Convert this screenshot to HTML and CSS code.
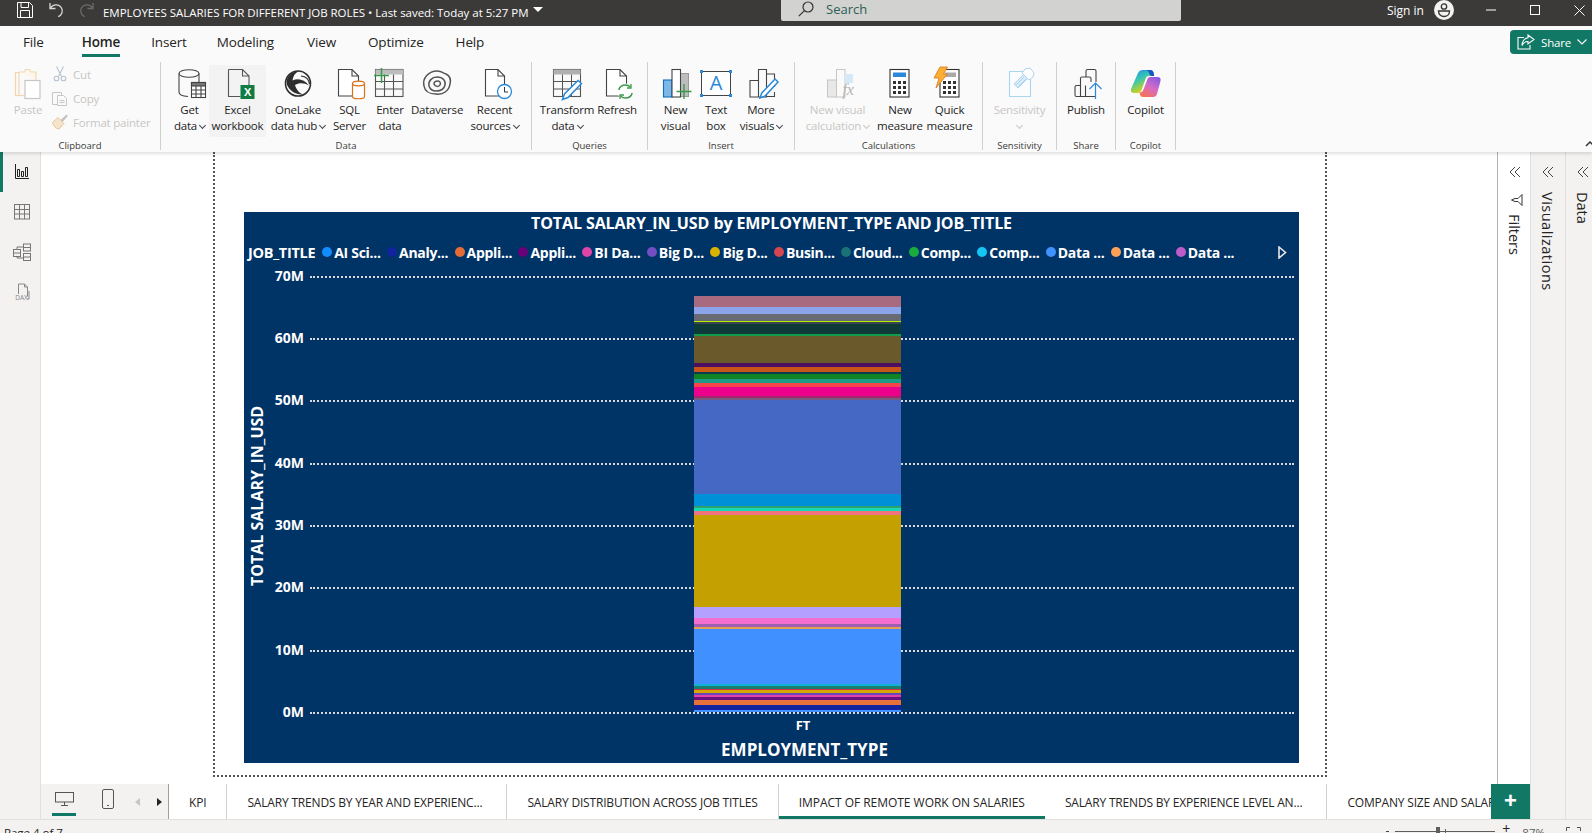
FILE: index.html
```html
<!DOCTYPE html>
<html lang="en">
<head>
  <meta charset="UTF-8">
  <meta name="viewport" content="width=device-width, initial-scale=1.0">
  <title>EMPLOYEES SALARIES FOR DIFFERENT JOB ROLES</title>
  <link rel="stylesheet" href="styles.css">
</head>
<body>
  <!-- Title bar -->
  <header class="titlebar">
    <div class="title-left">
      <svg class="tb-save" width="16" height="16" viewBox="0 0 16 16" fill="none" stroke="#fff" stroke-width="1"><path d="M.5.5h12l3 3v12H.5z"/><path d="M4 .5v5h7.500v-5M3.500 15.500v-7h9v7"/></svg>
      <svg class="tb-undo" width="15" height="16" viewBox="0 0 15 16" fill="none" stroke="#d8d8d8" stroke-width="1.300"><path d="M1 1v5.500h5.500"/><path d="M1.200 6.300C3 3.500 6 2.300 9 3.200c3.500 1.100 5 4.500 4 7.500-.6 1.800-2 3.200-3.800 4"/></svg>
      <svg class="tb-redo" width="15" height="16" viewBox="0 0 15 16" fill="none" stroke="#6b6a69" stroke-width="1.300"><path d="M14 1v5.500H8.500"/><path d="M13.800 6.300C12 3.500 9 2.300 6 3.200c-3.500 1.100-5 4.500-4 7.500.6 1.800 2 3.200 3.800 4"/></svg>
      <span class="doc-title">EMPLOYEES SALARIES FOR DIFFERENT JOB ROLES • Last saved: Today at 5:27 PM</span>
      <span class="doc-caret"></span>
    </div>
    <div class="search">
      <svg width="16" height="16" viewBox="0 0 16 16" fill="none" stroke="#333" stroke-width="1.200"><circle cx="10" cy="6" r="5"/><path d="M6.400 9.600.8 15.200"/></svg>
      <span>Search</span>
    </div>
    <div class="title-right">
      <span class="signin">Sign in</span>
      <svg class="avatar" width="20" height="20" viewBox="0 0 20 20"><circle cx="10" cy="10" r="10" fill="#f3f2f1"/><circle cx="10" cy="6.500" r="2.700" fill="none" stroke="#333" stroke-width="1.300"/><path d="M4.500 11h11c0 3.500-2.500 5.500-5.500 5.500S4.500 14.500 4.500 11z" fill="none" stroke="#333" stroke-width="1.300"/></svg>
      <svg class="win-min" width="10" height="10" viewBox="0 0 10 10"><path d="M0 5h10" stroke="#fff"/></svg>
      <svg class="win-max" width="10" height="10" viewBox="0 0 10 10"><rect x=".5" y=".5" width="9" height="9" fill="none" stroke="#fff"/></svg>
      <svg class="win-close" width="11" height="11" viewBox="0 0 11 11"><path d="M.5.5l10 10M10.500.5l-10 10" stroke="#fff"/></svg>
    </div>
  </header>

  <!-- Ribbon -->
  <nav class="ribbon-tabs">
    <span class="rtab rtab-file">File</span>
    <span class="rtab rtab-home active">Home</span>
    <span class="rtab rtab-insert">Insert</span>
    <span class="rtab rtab-modeling">Modeling</span>
    <span class="rtab">View</span>
    <span class="rtab">Optimize</span>
    <span class="rtab">Help</span>
    <div class="share-btn">
      <svg width="18" height="16" viewBox="0 0 18 16" fill="none" stroke="#fff" stroke-width="1.100"><path d="M7 3.500H1v11.500h12v-4"/><path d="M11 1l6 4.500-6 4.500V7.500C8 7.500 6 9 5 11.500 5 7.500 7.500 4 11 3.700z"/></svg>
      <span>Share</span>
      <svg width="10" height="6" viewBox="0 0 10 6" fill="none" stroke="#fff" stroke-width="1.100"><path d="M.5.500 5 5l4.500-4.500"/></svg>
    </div>
  </nav>

  <div class="ribbon">
    <section class="group g-clipboard">
      <div class="group-items">
        <div class="item it-paste disabled">
          <svg class="ico" viewBox="0 0 32 32" fill="none"><path d="M7 4h5l1.500-2.500h4L19 4h5v8" stroke="#f3d6b0" stroke-width="1.200" fill="#fdf6ec"/><path d="M3.500 4.500h3.500v23H3.500z" stroke="#f3d6b0" stroke-width="1.200" /><path d="M7 27.500h6" stroke="#f3d6b0" stroke-width="1.200"/><rect x="13" y="12.500" width="15" height="18" fill="#fff" stroke="#c8c6c4" stroke-width="1.200"/></svg>
          <span class="lbl">Paste</span>
        </div>
        <div class="small-col">
          <div class="small-item disabled">
            <svg width="16" height="16" viewBox="0 0 16 16" fill="none" stroke="#b6c4d2" stroke-width="1.100"><path d="M4.500.5l5 10M11.500.5l-5 10"/><circle cx="4.500" cy="12.500" r="2.300"/><circle cx="11.500" cy="12.500" r="2.300"/></svg>
            <span>Cut</span>
          </div>
          <div class="small-item disabled">
            <svg width="16" height="16" viewBox="0 0 16 16" fill="none" stroke="#c8c6c4"><path d="M.5 2.500h9v12h-9z"/><path d="M5.500 5.500h6l3 3v7h-9z" fill="#fafafa"/><path d="M7.500 10.500h5M7.500 12.500h5"/></svg>
            <span>Copy</span>
          </div>
          <div class="small-item disabled">
            <svg width="16" height="16" viewBox="0 0 16 16" fill="none"><path d="M.5 8.500 6 3.500l6 6-5 5.500C4 15 1.500 12 .5 8.500z" fill="#f5e3cb" stroke="#e8c69a"/><path d="M9 6l5.500-5 1 1-5 5.500z" fill="#c8c6c4" stroke="#b5b3b1" stroke-width=".6"/></svg>
            <span>Format painter</span>
          </div>
        </div>
      </div>
      <div class="group-label">Clipboard</div>
    </section>

    <section class="group g-data">
      <div class="group-items">
        <div class="item it-get">
          <svg class="ico" viewBox="0 0 32 32" fill="none" stroke="#444" stroke-width="1.100"><ellipse cx="15" cy="5.500" rx="10" ry="3.800"/><path d="M5 5.500V24c0 2.500 4 4.200 9 4.500M25 5.500V14"/><rect x="17.500" y="14.500" width="14" height="15" fill="#fff"/><rect x="17.500" y="14.500" width="14" height="3.500" fill="#777"/><path d="M17.500 22h14M17.500 26h14M22 18v11.500M27 18v11.500"/></svg>
          <span class="lbl">Get<br>data<i class="chev"></i></span>
        </div>
        <div class="item it-excel hovered">
          <svg class="ico" viewBox="0 0 32 32" fill="none"><path d="M6.500 1.500h14l6.500 6.500v9M18.500 28.500h-12V1.500" stroke="#555" stroke-width="1.100"/><path d="M20.500 1.500V8H27" stroke="#555" stroke-width="1.100"/><rect x="18.500" y="17" width="14" height="14" fill="#107c41"/><text class="xl" x="25.500" y="28">X</text></svg>
          <span class="lbl">Excel<br>workbook</span>
        </div>
        <div class="item it-onelake">
          <svg class="ico" viewBox="0 0 32 32" fill="none" stroke="#2e2e2e"><circle cx="16" cy="15.500" r="12.500" stroke-width="1.600"/><path d="M5 17C3 10 9 3 17 3c-4 2-6 5-6.500 9.500 5.500-2.500 12-1 16.500 5-5-3-10-3-14-.5 1 4 4 8 8 9.500C14 27 8 23 5 17z" fill="#2e2e2e" stroke="none"/><path d="M19 8c5 .5 8 4 8.500 8" stroke-width="1.200"/></svg>
          <span class="lbl">OneLake<br>data hub<i class="chev"></i></span>
        </div>
        <div class="item it-sql">
          <svg class="ico" viewBox="0 0 32 32" fill="none"><path d="M4.500 1.500h13.500l6.500 6.500v20H4.500z" stroke="#444" stroke-width="1.100" fill="#fff"/><path d="M18 1.500V8h6.500" stroke="#444" stroke-width="1.100"/><path d="M18.500 15.500v13c0 3 12 3 12 0v-13z" fill="#fff" stroke="#d9731a" stroke-width="1.200"/><ellipse cx="24.500" cy="15.500" rx="6" ry="2.300" fill="#fff" stroke="#d9731a" stroke-width="1.200"/></svg>
          <span class="lbl">SQL<br>Server</span>
        </div>
        <div class="item it-enter">
          <svg class="ico" viewBox="0 0 32 32" fill="none" stroke="#555" stroke-width="1.100"><rect x="1.500" y="1.500" width="27.500" height="27"/><rect x="1.500" y="1.500" width="27.500" height="5" fill="#bdbdbd" stroke="none"/><path d="M1.500 13.500H29M1.500 21H29M10.500 6.500v22M19.500 6.500v22"/><path d="M7.500 0v15M0 7.500h15" stroke="#3a9a4a" stroke-width="1.500"/></svg>
          <span class="lbl">Enter<br>data</span>
        </div>
        <div class="item it-dataverse">
          <svg class="ico" viewBox="0 0 32 32" fill="none" stroke="#555" stroke-width="1.500"><path d="M3 18C1 10 8 3 16 3c5 0 6 2 9 3 4 2 5 6 4 10-1 7-7 11-14 10C9 26 4 24 3 18z"/><path d="M8 18c-1-5 3-9 8-9 6 0 9 4 8 8-1 5-5 6-9 6-3 0-6-2-7-5z"/><path d="M13 16c0-2 2-3 4-3s3 2 2 4-5 2-6-1z"/></svg>
          <span class="lbl">Dataverse</span>
        </div>
        <div class="item it-recent">
          <svg class="ico" viewBox="0 0 32 32" fill="none"><path d="M6.500 1.500h12.500l6.500 6.500v20h-19z" stroke="#444" stroke-width="1.100" fill="#fff"/><path d="M19 1.500V8h6.500" stroke="#444" stroke-width="1.100"/><circle cx="25.500" cy="23.500" r="7" fill="#fff" stroke="#2b88d8" stroke-width="1.300"/><path d="M25.500 19v5h3.500" stroke="#333"/></svg>
          <span class="lbl">Recent<br>sources<i class="chev"></i></span>
        </div>
      </div>
      <div class="group-label">Data</div>
    </section>

    <section class="group g-queries">
      <div class="group-items">
        <div class="item it-transform">
          <svg class="ico" viewBox="0 0 32 32" fill="none"><rect x="2.500" y="1.500" width="27" height="27" stroke="#555" stroke-width="1.100"/><rect x="2.500" y="1.500" width="27" height="5" fill="#b0b0b0"/><path d="M2.500 13.500h27M2.500 21h27M11.500 6.500v22M20.500 6.500v22" stroke="#555"/><path d="M27 12.500l3.500 3L17 29.500l-5.500 2 2-5.500z" fill="#fff" stroke="#2b88d8" stroke-width="1.500"/></svg>
          <span class="lbl">Transform<br>data<i class="chev"></i></span>
        </div>
        <div class="item it-refresh">
          <svg class="ico" viewBox="0 0 32 32" fill="none"><path d="M5.500 1.500h13.500l6.500 6.500v20h-20z" stroke="#444" stroke-width="1.100" fill="#fff"/><path d="M19 1.500V8h6.500" stroke="#444" stroke-width="1.100"/><circle cx="24.500" cy="23.500" r="8" fill="#fff" stroke="none"/><path d="M17.800 22c.8-3 3.600-5 6.700-5 1.900 0 3.600.8 4.800 2.100M31.200 25c-.8 3-3.600 5-6.700 5-1.900 0-3.600-.8-4.800-2.100" stroke="#3a9a4a" stroke-width="1.500"/><path d="M30 16v4h-4M19 31v-4h4" stroke="#3a9a4a" stroke-width="1.300"/></svg>
          <span class="lbl">Refresh</span>
        </div>
      </div>
      <div class="group-label">Queries</div>
    </section>

    <section class="group g-insert">
      <div class="group-items">
        <div class="item it-newvis">
          <svg class="ico" viewBox="0 0 32 32" fill="none"><rect x="3.500" y="12" width="8.500" height="17" fill="#7cb8ea" stroke="#106ebe" stroke-width="1.100"/><rect x="20" y="5.500" width="8.500" height="23" fill="#bdbdbd" stroke="#999"/><rect x="12" y="1.500" width="8.500" height="27.500" fill="#fff" stroke="#444" stroke-width="1.100"/><path d="M24 16v15M16.500 23.500h15" stroke="#3a9a4a" stroke-width="1.400"/></svg>
          <span class="lbl">New<br>visual</span>
        </div>
        <div class="item it-textbox">
          <svg class="ico" viewBox="0 0 32 32" fill="none"><rect x="1.500" y="3.500" width="29" height="24" fill="#fff" stroke="#444"/><rect x="0" y="2" width="3" height="3" fill="#2b88d8"/><rect x="29" y="2" width="3" height="3" fill="#2b88d8"/><rect x="0" y="26" width="3" height="3" fill="#2b88d8"/><rect x="29" y="26" width="3" height="3" fill="#2b88d8"/><text class="tb-a" x="16" y="22">A</text></svg>
          <span class="lbl">Text<br>box</span>
        </div>
        <div class="item it-morevis">
          <svg class="ico" viewBox="0 0 32 32" fill="none" stroke="#444" stroke-width="1.100"><path d="M5 12.500h8.500V29H5zM13.500 1.500H21.500V29H13.500zM21.500 6h8v13M21.500 28.500h8V24"/><path d="M30 11l3 3-13 14-5 2 1.800-5z" fill="#fff" stroke="#2b88d8" stroke-width="1.500"/></svg>
          <span class="lbl">More<br>visuals<i class="chev"></i></span>
        </div>
      </div>
      <div class="group-label">Insert</div>
    </section>

    <section class="group g-calc">
      <div class="group-items">
        <div class="item it-newcalc disabled">
          <svg class="ico" viewBox="0 0 32 32" fill="none"><rect x="5.500" y="12" width="9" height="17" fill="#e8e8e8" stroke="#c8c6c4"/><rect x="14.500" y="1.500" width="8.500" height="27.500" fill="#fafafa" stroke="#c8c6c4"/><path d="M23 6h8v9h-8z" fill="#d6e9f8"/><text class="fx" x="26" y="27">fx</text></svg>
          <span class="lbl">New visual<br>calculation<i class="chev"></i></span>
        </div>
        <div class="item it-newmeasure">
          <svg class="ico" viewBox="0 0 32 32" fill="none"><rect x="6" y="1.500" width="19" height="27.500" fill="#fff" stroke="#333" stroke-width="1.100"/><rect x="9" y="4.500" width="13" height="4.500" fill="#2b88d8"/><path d="M9 13h3v3H9zM14 13h3v3h-3zM19 13h3v3h-3zM9 18h3v3H9zM14 18h3v3h-3zM19 18h3v3h-3zM9 23h3v3H9zM14 23h3v3h-3zM19 23h3v3h-3z" fill="#333"/></svg>
          <span class="lbl">New<br>measure</span>
        </div>
        <div class="item it-quick">
          <svg class="ico" viewBox="0 0 32 32" fill="none"><rect x="6" y="1.500" width="19" height="27.500" fill="#fff" stroke="#333" stroke-width="1.100"/><rect x="11" y="4.500" width="11" height="4.500" fill="#aaa"/><path d="M9 13h3v3H9zM14 13h3v3h-3zM19 13h3v3h-3zM9 18h3v3H9zM14 18h3v3h-3zM19 18h3v3h-3zM9 23h3v3H9zM14 23h3v3h-3zM19 23h3v3h-3z" fill="#333"/><path d="M6 -1h7.500L9.500 6h4L2 20l3-10H0z" fill="#fbb034" stroke="#d9731a" stroke-width=".8"/></svg>
          <span class="lbl">Quick<br>measure</span>
        </div>
      </div>
      <div class="group-label">Calculations</div>
    </section>

    <section class="group g-sens">
      <div class="group-items">
        <div class="item it-sens disabled">
          <svg class="ico" viewBox="0 0 32 32" fill="none"><path d="M5.500 3.500h21v25h-21z" fill="#fafcfe" stroke="#a8d5ef" stroke-width="1.100"/><path d="M10 16 21 5l4 4-11 11z" fill="#d9ecf8" stroke="#a8d5ef"/><path d="M21 1l5-1 4 5-1 4-4 3-7-7z" fill="#fff" stroke="#a8d5ef"/><path d="M12 17l8-8M14 19l8-8" stroke="#a8d5ef"/></svg>
          <span class="lbl">Sensitivity<br><i class="chev chev-solo"></i></span>
        </div>
      </div>
      <div class="group-label">Sensitivity</div>
    </section>

    <section class="group g-share">
      <div class="group-items">
        <div class="item it-publish">
          <svg class="ico" viewBox="0 0 32 32" fill="none" stroke="#444" stroke-width="1.100"><path d="M16 9V3c0-.8.7-1.500 1.500-1.500h7c.8 0 1.500.7 1.500 1.500v11M25 28.500H6.500c-1 0-1.500-.7-1.500-1.500v-8c0-1 .7-1.500 1.500-1.500H10.500M10.500 28V10.500c0-.8.7-1.500 1.500-1.500h7.500c.8 0 1.500.7 1.500 1.500V14M15.500 17.500V28"/><path d="M25.500 31V15M19.500 21l6-6 6 6" stroke="#2b88d8" stroke-width="1.200"/></svg>
          <span class="lbl">Publish</span>
        </div>
      </div>
      <div class="group-label">Share</div>
    </section>

    <section class="group g-copilot">
      <div class="group-items">
        <div class="item it-copilot">
          <svg class="ico" viewBox="0 0 32 32">
            <defs>
              <linearGradient id="cpl" x1="0" y1="0" x2=".5" y2="1"><stop offset="0" stop-color="#1f8fe8"/><stop offset=".45" stop-color="#36c5b4"/><stop offset=".8" stop-color="#a8d23a"/><stop offset="1" stop-color="#f5c61c"/></linearGradient>
              <linearGradient id="cpr" x1=".8" y1="0" x2=".2" y2="1"><stop offset="0" stop-color="#8a5be0"/><stop offset=".5" stop-color="#d76bc4"/><stop offset="1" stop-color="#f8724a"/></linearGradient>
              <linearGradient id="cpt" x1="0" y1="0" x2="1" y2="0"><stop offset="0" stop-color="#1a6fe0"/><stop offset="1" stop-color="#1450b8"/></linearGradient>
            </defs>
            <path d="M8 5C9 3 10.500 2 12.500 2h8c1.500 0 2.500 1 3 2.500l.5 3-5 .5c-2 0-3 1-3.500 3L11.500 22c-.6 2-2 3-4 3H4C1.500 25 .5 23.500 1 21z" fill="url(#cpl)"/>
            <path d="M24 9h3.500c2.500 0 3.500 1.500 3 4L27 26c-.6 2-2 3-4 3H13c-1.500 0-2.500-.8-3-2.500l-.5-2c2 0 3.500-1 4-3L17.500 11c.4-1.300 1.500-2 3-2z" fill="url(#cpr)"/>
            <path d="M12 2h8.500c1.500 0 2.500 1 3 2.500l.7 3.500h-2.500c-1 0-2-1-2.700-3S17 2 14 2.500z" fill="url(#cpt)"/>
          </svg>
          <span class="lbl">Copilot</span>
        </div>
      </div>
      <div class="group-label">Copilot</div>
    </section>
    <svg class="ribbon-collapse" width="10" height="6" viewBox="0 0 10 6" fill="none" stroke="#333" stroke-width="1.500"><path d="M1 5l4-4 4 4"/></svg>
  </div>

  <!-- Workspace -->
  <div class="workspace">
    <aside class="rail">
      <div class="rail-btn active">
        <svg width="16" height="16" viewBox="0 0 16 16" fill="none" stroke="#222"><path d="M1.500 0v14.500H15"/><path d="M3.500 5.500h2v7h-2zM7.500 7.500h2v5h-2zM11.500 3.500h2v9h-2z"/></svg>
      </div>
      <div class="rail-btn">
        <svg width="16" height="16" viewBox="0 0 16 16" fill="none" stroke="#777"><rect x=".5" y=".5" width="15" height="14.500"/><path d="M.5 5.500h15M.5 10h15M5.500.5V15M10.500.5V15"/></svg>
      </div>
      <div class="rail-btn">
        <svg width="18" height="18" viewBox="0 0 18 18" fill="none" stroke="#777"><rect x=".5" y="6.500" width="7" height="7"/><path d="M.5 10h7"/><rect x="10.500" y="1" width="7" height="7"/><path d="M10.500 4.500h7"/><rect x="10.500" y="10.500" width="7" height="7"/><path d="M10.500 14h7M4 6.500V4h6.500M4 13.500V15h6.500"/></svg>
      </div>
      <div class="rail-btn">
        <svg width="18" height="18" viewBox="0 0 18 18" fill="none" stroke="#888"><path d="M5.500 11V1h6l3 3v9.500"/><path d="M11.500 1v3h3M16 8v8h-2"/><text class="dax" x="8.500" y="16.500">DAX</text></svg>
      </div>
    </aside>

    <main class="canvas-area">
      <div class="canvas-row">
        <div class="canvas-scroll">
          <div class="page-frame">
            <div class="chart">
              <div class="chart-title">TOTAL SALARY_IN_USD by EMPLOYMENT_TYPE AND JOB_TITLE</div>
              <div class="legend">
                <span class="legend-name">JOB_TITLE</span>
                <span class="leg"><i class="d1"></i>AI Sci...</span>
                <span class="leg"><i class="d2"></i>Analy...</span>
                <span class="leg"><i class="d3"></i>Appli...</span>
                <span class="leg"><i class="d4"></i>Appli...</span>
                <span class="leg"><i class="d5"></i>BI Da...</span>
                <span class="leg"><i class="d6"></i>Big D...</span>
                <span class="leg"><i class="d7"></i>Big D...</span>
                <span class="leg"><i class="d8"></i>Busin...</span>
                <span class="leg"><i class="d9"></i>Cloud...</span>
                <span class="leg"><i class="d10"></i>Comp...</span>
                <span class="leg"><i class="d11"></i>Comp...</span>
                <span class="leg"><i class="d12"></i>Data ...</span>
                <span class="leg"><i class="d13"></i>Data ...</span>
                <span class="leg"><i class="d14"></i>Data ...</span>
                <svg class="legend-next" width="9" height="13" viewBox="0 0 9 13"><path d="M1 1l6.500 5.500L1 12z" fill="#003366" stroke="#e8e8e8" stroke-width="1.600"/></svg>
              </div>
              <div class="plot">
                <div class="y-title">TOTAL SALARY_IN_USD</div>
                <div class="grid">
                  <div class="tick"><span>70M</span><b></b></div>
                  <div class="tick"><span>60M</span><b></b></div>
                  <div class="tick"><span>50M</span><b></b></div>
                  <div class="tick"><span>40M</span><b></b></div>
                  <div class="tick"><span>30M</span><b></b></div>
                  <div class="tick"><span>20M</span><b></b></div>
                  <div class="tick"><span>10M</span><b></b></div>
                  <div class="tick tick-zero"><span>0M</span><b></b></div>
                  <div class="stack">
                    <div class="seg" style="height:11.3px;background:#a76a7e"></div>
                    <div class="seg" style="height:7px;background:#8ca4ea"></div>
                    <div class="seg" style="height:6.700px;background:#686b73"></div>
                    <div class="seg" style="height:1px;background:#b5f000"></div>
                    <div class="seg" style="height:2.300px;background:#3a4550"></div>
                    <div class="seg" style="height:9.700px;background:#0e3b3a"></div>
                    <div class="seg" style="height:2px;background:#149a4b"></div>
                    <div class="seg" style="height:26.700px;background:#6a5a2b"></div>
                    <div class="seg" style="height:4.300px;background:#4d1060"></div>
                    <div class="seg" style="height:5.300px;background:#c8541a"></div>
                    <div class="seg" style="height:2px;background:#0a3d4a"></div>
                    <div class="seg" style="height:4.400px;background:#108324"></div>
                    <div class="seg" style="height:4.600px;background:#1f9a85"></div>
                    <div class="seg" style="height:3.400px;background:#f8434a"></div>
                    <div class="seg" style="height:9.300px;background:#ec008c"></div>
                    <div class="seg" style="height:2.300px;background:#a0286a"></div>
                    <div class="seg" style="height:1.700px;background:#7a5a80"></div>
                    <div class="seg" style="height:94.300px;background:#4668c5"></div>
                    <div class="seg" style="height:11.700px;background:#0090d8"></div>
                    <div class="seg" style="height:1.700px;background:#2fa070"></div>
                    <div class="seg" style="height:3.300px;background:#14d9b5"></div>
                    <div class="seg" style="height:3.700px;background:#ef7480"></div>
                    <div class="seg" style="height:92px;background:#c4a000"></div>
                    <div class="seg" style="height:11.600px;background:#b3a0ff"></div>
                    <div class="seg" style="height:5.700px;background:#f46fcf"></div>
                    <div class="seg" style="height:3px;background:#a05fb0"></div>
                    <div class="seg" style="height:1.700px;background:#e8a050"></div>
                    <div class="seg" style="height:55.600px;background:#4091ff"></div>
                    <div class="seg" style="height:1.700px;background:#10b0d8"></div>
                    <div class="seg" style="height:3.300px;background:#1b7f70"></div>
                    <div class="seg" style="height:1px;background:#cc2e44"></div>
                    <div class="seg" style="height:3px;background:#d9a800"></div>
                    <div class="seg" style="height:1.700px;background:#6b45c0"></div>
                    <div class="seg" style="height:2.300px;background:#e040a8"></div>
                    <div class="seg" style="height:3px;background:#6a1080"></div>
                    <div class="seg" style="height:5.400px;background:#e8703a"></div>
                    <div class="seg" style="height:4.300px;background:#12239e"></div>
                    <div class="seg" style="height:2.700px;background:#4091ff"></div>
                  </div>
                </div>
              </div>
              <div class="x-tick">FT</div>
              <div class="x-title">EMPLOYMENT_TYPE</div>
            </div>
          </div>
        </div>
        <aside class="pane pane-filters">
          <svg class="collapse" width="12" height="12" viewBox="0 0 12 12" fill="none" stroke="#444"><path d="M6 1 1 6l5 5M11 1 6 6l5 5"/></svg>
          <svg class="filter-ico" width="12" height="12" viewBox="0 0 12 12" fill="none" stroke="#333"><path d="M11 .5v11L7 7.500H4L.5 6 4 4.500h3z"/></svg>
          <span class="pane-text">Filters</span>
        </aside>
      </div>
      <footer class="page-tabs">
        <div class="view-btns">
          <div class="view-btn active">
            <svg width="19" height="14" viewBox="0 0 19 14" fill="none" stroke="#555"><rect x=".5" y=".5" width="18" height="9.500"/><path d="M9.500 10v3M6 13.500h7"/></svg>
          </div>
          <div class="view-btn">
            <svg width="12" height="20" viewBox="0 0 12 20" fill="none" stroke="#555"><rect x=".5" y=".5" width="11" height="19" rx="1.500"/><path d="M5 16.500h2"/></svg>
          </div>
          <i class="nav-arrow prev"></i>
          <i class="nav-arrow next"></i>
        </div>
        <div class="tabs-scroll">
          <span class="ptab">KPI</span>
          <span class="ptab ptab-long">SALARY TRENDS BY YEAR AND EXPERIENC...</span>
          <span class="ptab">SALARY DISTRIBUTION ACROSS JOB TITLES</span>
          <span class="ptab active">IMPACT OF REMOTE WORK ON SALARIES</span>
          <span class="ptab ptab-long">SALARY TRENDS BY EXPERIENCE LEVEL AN...</span>
          <span class="ptab">COMPANY SIZE AND SALARY</span>
        </div>
        <div class="add-page">+</div>
      </footer>
    </main>

    <aside class="pane pane-vis">
      <svg class="collapse" width="12" height="12" viewBox="0 0 12 12" fill="none" stroke="#444"><path d="M6 1 1 6l5 5M11 1 6 6l5 5"/></svg>
      <span class="pane-text">Visualizations</span>
    </aside>
    <aside class="pane pane-data">
      <svg class="collapse" width="12" height="12" viewBox="0 0 12 12" fill="none" stroke="#444"><path d="M6 1 1 6l5 5M11 1 6 6l5 5"/></svg>
      <span class="pane-text">Data</span>
    </aside>
  </div>

  <!-- Status bar -->
  <footer class="statusbar">
    <span class="page-count">Page 4 of 7</span>
    <div class="zoom">
      <span class="zoom-minus"></span>
      <div class="zoom-track"><i class="zoom-thumb"></i><i class="zoom-mid"></i></div>
      <span class="zoom-plus">+</span>
      <span class="zoom-val">87%</span>
      <svg class="zoom-fit" width="15" height="12" viewBox="0 0 15 12" fill="none" stroke="#555"><path d="M.5 4V.5H4M11 .5h3.500V4M.5 8v3.500H4M11 11.500h3.500V8"/></svg>
    </div>
  </footer>
</body>
</html>
```

FILE: styles.css
```css
* {
  box-sizing: border-box;
}

html,
body {
  margin: 0;
  padding: 0;
  height: 833px;
  overflow: hidden;
}

body {
  font-family: "Open Sans", "Noto Sans", sans-serif;
  color: #252423;
  background: #fff;
  display: flex;
  flex-direction: column;
}

svg {
  display: block;
  flex: none;
}

/* Title bar */
.titlebar {
  display: flex;
  flex: none;
  height: 26px;
  background: #3b3a39;
  color: #fff;
  font-size: 11.5px;
  letter-spacing: -0.03px;
}

.title-left {
  display: flex;
  align-items: center;
  width: 781px;
  padding-left: 17px;
}

.title-left svg {
  margin-bottom: 7px;
}

.tb-undo {
  margin-left: 16px;
}

.tb-redo {
  margin-left: 15px;
}

.doc-title {
  margin-left: 9px;
  padding-bottom: 1px;
  white-space: nowrap;
}

.doc-caret {
  margin-left: 5px;
  margin-bottom: 7px;
  border: 4px solid transparent;
  border-top: 5px solid #fff;
  border-bottom: none;
  border-left-width: 5px;
  border-right-width: 5px;
}

.search {
  display: flex;
  align-items: center;
  gap: 12px;
  width: 400px;
  height: 21px;
  padding-left: 17px;
  padding-bottom: 3px;
  background: #d2d2d0;
  border-radius: 0 0 2px 2px;
  color: #2c5f56;
  font-size: 13px;
  letter-spacing: 0;
}

.title-right {
  flex: 1;
  display: flex;
  align-items: center;
  padding-bottom: 6px;
  font-size: 12px;
}

.signin {
  margin-left: 206px;
}

.avatar {
  margin-left: 10px;
}

.win-min {
  margin-left: 32px;
}

.win-max {
  margin-left: 34px;
}

.win-close {
  margin-left: 34px;
}

/* Ribbon */
.ribbon-tabs {
  display: flex;
  flex: none;
  align-items: flex-start;
  height: 36px;
  padding-left: 23px;
  background: #fafafa;
  font-size: 13.500px;
  letter-spacing: -0.15px;
}

.rtab {
  margin-right: 32px;
  padding: 6px 0 2px;
  line-height: 20px;
  border-bottom: 3px solid transparent;
}

.rtab-file {
  margin-right: 38px;
}

.rtab-home {
  margin-right: 31px;
}

.rtab-insert {
  margin-right: 30px;
}

.rtab-modeling {
  margin-right: 33px;
}

.rtab.active {
  border-bottom-color: #117865;
  font-weight: 600;
}

.share-btn {
  display: flex;
  align-items: center;
  gap: 6px;
  width: 82px;
  height: 24px;
  margin: 4px 0 0 auto;
  padding-left: 7px;
  background: #117865;
  border-radius: 4px 0 0 4px;
  color: #fff;
  font-size: 11.500px;
}

.ribbon {
  position: relative;
  display: flex;
  flex: none;
  height: 90px;
  background: #fafafa;
  box-shadow: 0 2px 3px rgba(0, 0, 0, 0.12);
  z-index: 2;
  font-size: 11.500px;
  letter-spacing: -0.2px;
}

.group {
  height: 88px;
  padding-top: 3px;
  border-right: 1px solid #d2d0ce;
}

.group-items {
  display: flex;
  height: 72px;
}

.group-label {
  margin-top: 3px;
  line-height: 12px;
  font-size: 9.500px;
  letter-spacing: 0;
  text-align: center;
  color: #3b3a39;
  white-space: nowrap;
}

.g-clipboard {
  width: 161px;
}

.g-data {
  width: 371px;
}

.g-data .group-items {
  padding-left: 9px;
}

.g-queries {
  width: 116px;
}

.g-queries .group-items {
  padding-left: 8px;
}

.g-insert {
  width: 147px;
}

.g-insert .group-items {
  padding-left: 7px;
}

.g-calc {
  width: 188px;
}

.g-calc .group-items {
  padding-left: 8px;
}

.g-sens {
  width: 74px;
}

.g-share {
  width: 59px;
}

.g-copilot {
  width: 60px;
}

.item {
  display: flex;
  flex-direction: column;
  align-items: center;
  flex: none;
  white-space: nowrap;
}

.ico {
  width: 32px;
  height: 32px;
  margin-top: 3px;
  overflow: visible;
}

.lbl {
  margin-top: 2px;
  line-height: 16px;
  text-align: center;
}

.disabled {
  color: #c8c6c4;
}

.hovered {
  background: #f3f3f3;
}

.chev {
  display: inline-block;
  width: 5px;
  height: 5px;
  margin-left: 3px;
  margin-bottom: 2px;
  border-right: 1px solid #444;
  border-bottom: 1px solid #444;
  transform: rotate(45deg);
}

.chev-solo {
  margin-left: 0;
}

.disabled .chev {
  border-color: #c8c6c4;
}

.it-paste {
  width: 36px;
  margin-left: 10px;
}

.small-col {
  display: flex;
  flex-direction: column;
  margin: -3px 0 0 6px;
}

.small-item {
  display: flex;
  align-items: center;
  gap: 5px;
  height: 24px;
  white-space: nowrap;
}

.it-get { width: 39px; }
.it-excel { width: 57px; }
.it-onelake { width: 64px; }
.it-sql { width: 39px; }
.it-enter { width: 42px; }
.it-dataverse { width: 52px; }
.it-recent { width: 63px; }
.it-transform { width: 54px; }
.it-refresh { width: 46px; }
.it-newvis { width: 41px; }
.it-textbox { width: 40px; }
.it-morevis { width: 50px; }
.it-newcalc { width: 69px; }
.it-newmeasure { width: 56px; }
.it-quick { width: 43px; }
.it-sens { width: 73px; }
.it-publish { width: 58px; }
.it-copilot { width: 59px; }

.xl {
  font: 700 11px "Liberation Sans", sans-serif;
  fill: #fff;
  stroke: none;
  text-anchor: middle;
}

.tb-a {
  font: 400 20px "Open Sans", sans-serif;
  fill: #2b88d8;
  stroke: none;
  text-anchor: middle;
}

.fx {
  font: italic 400 16px "Liberation Serif", serif;
  fill: #b5b3b1;
  stroke: none;
  text-anchor: middle;
}

.dax {
  font: 400 6.500px "Open Sans", sans-serif;
  fill: #888;
  stroke: none;
  text-anchor: middle;
}

.ribbon-collapse {
  position: absolute;
  right: -3px;
  top: 79px;
}

/* Workspace */
.workspace {
  display: flex;
  flex: none;
  height: 667px;
}

.rail {
  width: 41px;
  flex: none;
  background: #f3f2f1;
  border-right: 1px solid #e1dfdd;
}

.rail-btn {
  display: flex;
  align-items: center;
  justify-content: center;
  height: 40px;
  padding-left: 1px;
  border-left: 3px solid transparent;
}

.rail-btn.active {
  border-left-color: #117865;
}

.canvas-area {
  width: 1489px;
  flex: none;
  display: flex;
  flex-direction: column;
}

.canvas-row {
  display: flex;
  height: 632px;
}

.canvas-scroll {
  flex: 1;
  padding-left: 172px;
}

.page-frame {
  width: 1114px;
  height: 625px;
  padding: 60px 26px 13px 29px;
  border: 2px dotted #555;
  border-top: none;
}

/* Chart */
.chart {
  height: 551px;
  background: #003366;
  color: #fff;
  font-weight: 700;
}

.chart-title {
  height: 22px;
  line-height: 22px;
  font-size: 16px;
  letter-spacing: -0.1px;
  text-align: center;
}

.legend {
  display: flex;
  align-items: center;
  height: 24px;
  margin-top: 6px;
  padding-left: 4px;
  font-size: 14px;
  letter-spacing: -0.3px;
  white-space: nowrap;
}

.legend-name {
  margin-right: 7px;
  font-size: 14.500px;
}

.leg {
  display: flex;
  align-items: center;
  gap: 2px;
  margin-right: 6.400px;
}

.leg i {
  width: 10px;
  height: 10px;
  border-radius: 50%;
}

.d1 { background: #118dff; }
.d2 { background: #12239e; }
.d3 { background: #e66c37; }
.d4 { background: #6b007b; }
.d5 { background: #e044a7; }
.d6 { background: #744ec2; }
.d7 { background: #d9b300; }
.d8 { background: #d64550; }
.d9 { background: #197278; }
.d10 { background: #1aab40; }
.d11 { background: #15c6f4; }
.d12 { background: #4092ff; }
.d13 { background: #ffa058; }
.d14 { background: #be5dc9; }

.legend-next {
  margin-left: auto;
  margin-right: 12px;
}

.plot {
  display: flex;
  margin-top: 11.500px;
}

.y-title {
  flex: none;
  width: 26px;
  height: 437px;
  margin-top: 1px;
  writing-mode: vertical-rl;
  transform: rotate(180deg);
  text-align: center;
  line-height: 26px;
  font-size: 16px;
  letter-spacing: 0;
}

.grid {
  position: relative;
  flex: 1;
  padding-right: 5px;
}

.tick {
  display: flex;
  height: 62.400px;
  font-size: 14px;
}

.tick-zero {
  height: 2px;
}

.tick span {
  width: 34px;
  margin-top: -1px;
  line-height: 2px;
  text-align: right;
}

.tick b {
  flex: 1;
  height: 2px;
  margin-left: 6px;
  border-top: 2px dotted #d9d9d9;
}

.stack {
  position: absolute;
  left: 424px;
  top: 20.500px;
  width: 207px;
}

.seg {
  width: 100%;
}

.x-tick {
  margin-top: 3px;
  padding-left: 63px;
  line-height: 16px;
  font-size: 13px;
  text-align: center;
}

.x-title {
  margin-top: 6px;
  padding-left: 66px;
  line-height: 22px;
  font-size: 17px;
  text-align: center;
}

/* Page tabs */
.page-tabs {
  display: flex;
  flex: none;
  height: 35px;
}

.view-btns {
  position: relative;
  display: flex;
  width: 128px;
  flex: none;
  background: #f3f2f1;
  border-right: 1px solid #a19f9d;
}

.view-btn {
  display: flex;
  justify-content: center;
  align-items: flex-start;
  height: 32px;
  padding-top: 6px;
}

.view-btn:nth-child(1) {
  width: 24px;
  margin-left: 11px;
  border-bottom: 3px solid #117865;
  padding-top: 8px;
}

.view-btn:nth-child(2) {
  width: 12px;
  margin-left: 26px;
  padding-top: 5px;
}

.nav-arrow {
  width: 0;
  height: 0;
  margin-top: 14px;
  border-top: 4px solid transparent;
  border-bottom: 4px solid transparent;
}

.nav-arrow.prev {
  margin-left: 21px;
  border-right: 5px solid #c8c6c4;
}

.nav-arrow.next {
  margin-left: 17px;
  border-left: 5px solid #252423;
}

.tabs-scroll {
  flex: 1;
  display: flex;
  overflow: hidden;
  font-size: 12px;
  letter-spacing: -0.18px;
}

.ptab {
  flex: none;
  height: 35px;
  padding: 0 20px;
  line-height: 37px;
  border-right: 1px solid #d2d0ce;
  white-space: nowrap;
}

.ptab-long {
  padding-right: 24px;
}

.ptab.active {
  border-bottom: 3px solid #117865;
  border-right: none;
  letter-spacing: -0.03px;
}

.add-page {
  width: 39px;
  flex: none;
  background: #117865;
  color: #fff;
  font: 700 22px/33px "Liberation Sans", sans-serif;
  text-align: center;
}

/* Side panes */
.pane {
  position: relative;
  flex: none;
  font-size: 14.500px;
  border-left: 1px solid #b3b0ad;
}

.pane-filters {
  width: 33px;
}

.pane-vis {
  width: 35px;
  background: #f3f2f1;
  border-left-color: #e1dfdd;
}

.pane-data {
  width: 27px;
  background: #f3f2f1;
  border-left-color: #e1dfdd;
}

.collapse {
  position: absolute;
  top: 14px;
  left: 11px;
}

.filter-ico {
  position: absolute;
  top: 42px;
  left: 13px;
}

.pane-text {
  position: absolute;
  top: 40px;
  left: 7px;
  writing-mode: vertical-rl;
  line-height: 18px;
}

.pane-filters .pane-text {
  top: 62px;
}

.pane-vis .pane-text {
  letter-spacing: 0.5px;
}

/* Status bar */
.statusbar {
  position: relative;
  flex: 1;
  display: flex;
  justify-content: space-between;
  background: #f3f2f1;
  border-top: 1px solid #e1dfdd;
  font-size: 11.500px;
}

.page-count {
  margin-left: 4px;
  padding-top: 5px;
  line-height: 16px;
}

.zoom {
  display: flex;
  align-items: flex-start;
  margin-right: 11px;
}

.zoom-minus {
  width: 3px;
  height: 1px;
  margin-top: 11px;
  background: #444;
}

.zoom-track {
  position: relative;
  width: 100px;
  height: 1px;
  margin: 11px 0 0 6px;
  background: #605e5c;
}

.zoom-thumb {
  position: absolute;
  left: 41px;
  top: -4px;
  width: 4px;
  height: 10px;
  background: #605e5c;
}

.zoom-mid {
  position: absolute;
  left: 50px;
  top: -2px;
  width: 1px;
  height: 6px;
  background: #605e5c;
}

.zoom-plus {
  margin: 1px 0 0 7px;
  line-height: 16px;
  font-size: 14px;
}

.zoom-val {
  margin-left: 12px;
  padding-top: 5px;
  line-height: 16px;
  color: #605e5c;
}

.zoom-fit {
  margin: 7px 0 0 21px;
}
```
